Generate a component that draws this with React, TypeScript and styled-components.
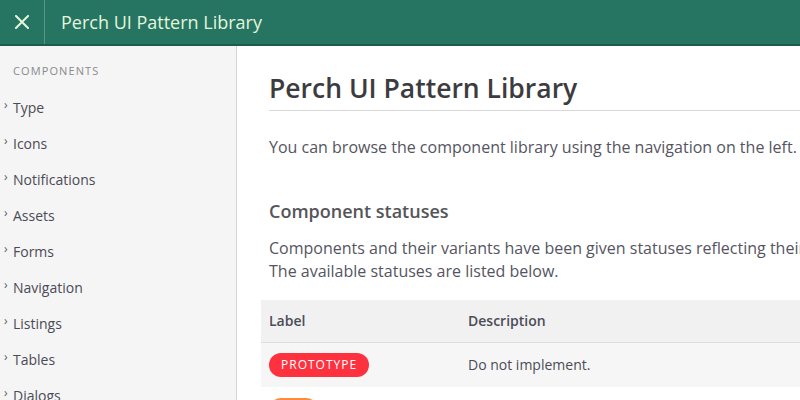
import React from "react";
import styled, { createGlobalStyle } from "styled-components";

const Global = createGlobalStyle`
  html, body { margin: 0; padding: 0; overflow: hidden; }
  body { font-family: "Open Sans", "Noto Sans", sans-serif; background: #fff; width: 800px; height: 400px; }
  * { box-sizing: border-box; }
`;

const Page = styled.div`
  width: 800px;
  height: 400px;
  display: flex;
  flex-direction: column;
  overflow: hidden;
`;

const TopBar = styled.header`
  height: 46px;
  flex: none;
  display: flex;
  align-items: stretch;
  background: #267562;
  border-bottom: 2px solid #1d5c4c;
  color: #e4f6dc;
`;

const CloseButton = styled.div`
  width: 45px;
  display: flex;
  align-items: center;
  justify-content: center;
  border-right: 1px solid #5a9886;
`;

const TopTitle = styled.div`
  padding-left: 16px;
  display: flex;
  align-items: center;
  font-size: 18px;
  line-height: 1;
  padding-bottom: 1px;
`;

const Body = styled.div`
  flex: 1;
  display: flex;
  min-height: 0;
`;

const Sidebar = styled.nav`
  width: 237px;
  flex: none;
  background: #f5f5f5;
  border-right: 1px solid #d4d4d4;
  padding-top: 17px;
`;

const SideHeading = styled.div`
  padding-left: 13px;
  font-size: 11px;
  letter-spacing: 1.1px;
  color: #8a8a8e;
  line-height: 16px;
  margin-bottom: 10px;
`;

const NavItem = styled.div`
  display: flex;
  align-items: center;
  height: 36px;
  font-size: 14px;
  color: #4b4b55;
  padding-left: 4px;
`;

const Chevron = styled.span`
  width: 9px;
  font-size: 12px;
  color: #5a5a64;
  margin-top: -5px;
`;

const Main = styled.main`
  flex: 1;
  min-width: 0;
  overflow: hidden;
  padding: 24px 0 0 32px;
`;

const Content = styled.div`
  width: 760px;
`;

const H1 = styled.h1`
  margin: 0;
  font-size: 26.5px;
  font-weight: 600;
  color: #3c3c40;
  line-height: 36px;
  padding-bottom: 4px;
  border-bottom: 1px solid #d8d8d8;
`;

const P = styled.p`
  margin: 0;
  font-size: 16px;
  line-height: 23px;
  color: #55555f;
`;

const Lead = styled(P)`
  margin-top: 25px;
`;

const H2 = styled.h2`
  margin: 39px 0 0;
  font-size: 18px;
  font-weight: 600;
  line-height: 26px;
  color: #555559;
`;

const Intro = styled(P)`
  margin-top: 13px;
`;

const Table = styled.table`
  margin: 17px 0 0 -8px;
  border-collapse: collapse;
  width: 800px;
  font-size: 14px;
`;

const Th = styled.th<{ $w?: number }>`
  text-align: left;
  font-weight: 600;
  color: #4c4c58;
  padding: 0 8px;
  height: 42px;
  background: #f1f1f1;
  border-bottom: 1px solid #dedede;
  width: ${(p) => (p.$w ? `${p.$w}px` : "auto")};
`;

const Tr = styled.tr<{ $shade?: boolean }>`
  background: ${(p) => (p.$shade ? "#f6f6f6" : "#fff")};
`;

const Td = styled.td`
  padding: 0 8px;
  height: 45px;
  color: #4c4c58;
`;

const Badge = styled.span<{ $color: string }>`
  display: inline-block;
  vertical-align: middle;
  background: ${(p) => p.$color};
  color: #fff;
  font-size: 12px;
  letter-spacing: 1px;
  line-height: 24px;
  height: 24px;
  padding: 0 12px;
  border-radius: 12px;
`;

const items = ["Type", "Icons", "Notifications", "Assets", "Forms", "Navigation", "Listings", "Tables", "Dialogs"];

export default function App() {
  return (
    <Page>
      <Global />
      <TopBar>
        <CloseButton>
          <svg width="14" height="14" viewBox="0 0 14 14">
            <path d="M1 1L13 13M13 1L1 13" stroke="#e4f6dc" strokeWidth="2" strokeLinecap="square" />
          </svg>
        </CloseButton>
        <TopTitle>Perch UI Pattern Library</TopTitle>
      </TopBar>
      <Body>
        <Sidebar>
          <SideHeading>COMPONENTS</SideHeading>
          {items.map((i) => (
            <NavItem key={i}>
              <Chevron>›</Chevron>
              {i}
            </NavItem>
          ))}
        </Sidebar>
        <Main>
          <Content>
            <H1>Perch UI Pattern Library</H1>
            <Lead>You can browse the component library using the navigation on the left.</Lead>
            <H2>Component statuses</H2>
            <Intro>
              Components and their variants have been given statuses reflecting their state of completion.
              <br />
              The available statuses are listed below.
            </Intro>
            <Table>
              <thead>
                <tr>
                  <Th $w={199}>Label</Th>
                  <Th>Description</Th>
                </tr>
              </thead>
              <tbody>
                <Tr $shade>
                  <Td>
                    <Badge $color="#fe323f">PROTOTYPE</Badge>
                  </Td>
                  <Td>Do not implement.</Td>
                </Tr>
                <Tr>
                  <Td>
                    <Badge $color="#ff8a3a">WIP</Badge>
                  </Td>
                  <Td>Work in progress.</Td>
                </Tr>
              </tbody>
            </Table>
          </Content>
        </Main>
      </Body>
    </Page>
  );
}
